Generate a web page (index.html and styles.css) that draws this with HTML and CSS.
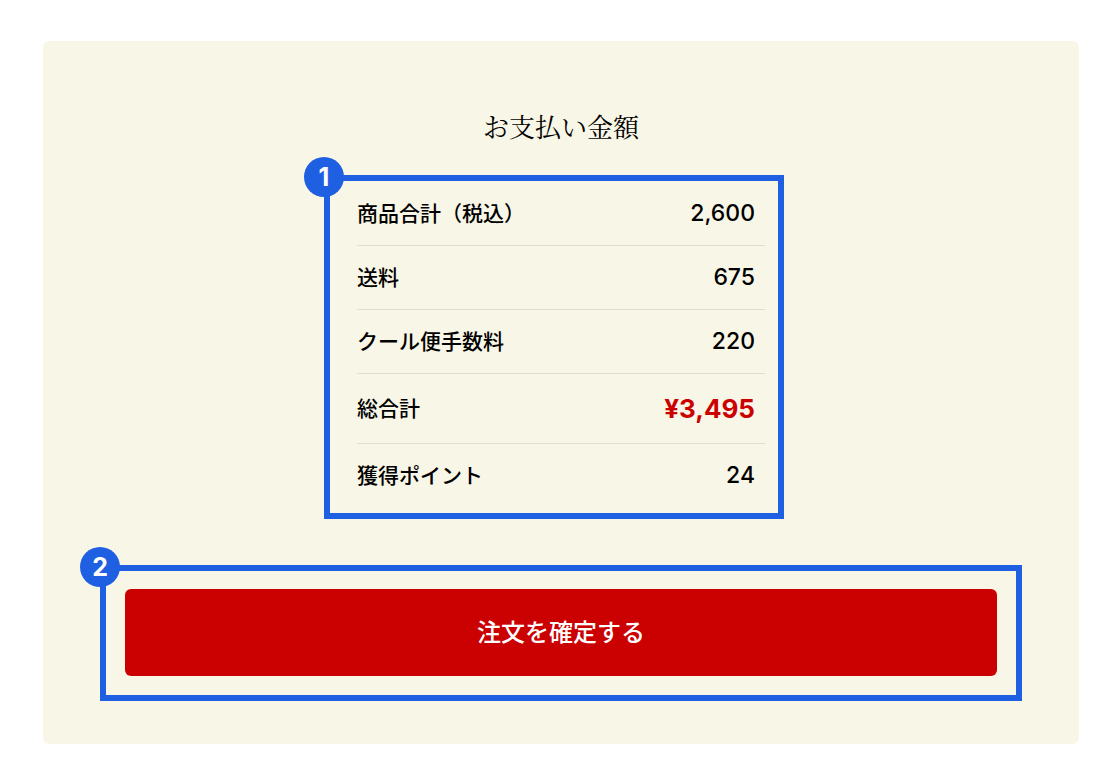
FILE: index.html
```
<!DOCTYPE html>
<html lang="ja">
<head>
<meta charset="utf-8">
<meta name="viewport" content="width=device-width, initial-scale=1">
<title>お支払い金額</title>
<link rel="stylesheet" href="styles.css">
</head>
<body>
<main class="payment">
  <h1 class="payment-title">お支払い金額</h1>
  <div class="summary">
    <dl class="summary-list">
      <div class="summary-row"><dt>商品合計（税込）</dt><dd>2,600</dd></div>
      <div class="summary-row"><dt>送料</dt><dd>675</dd></div>
      <div class="summary-row"><dt>クール便手数料</dt><dd>220</dd></div>
      <div class="summary-row summary-total"><dt>総合計</dt><dd>¥3,495</dd></div>
      <div class="summary-row"><dt>獲得ポイント</dt><dd>24</dd></div>
    </dl>
    <div class="callout callout-summary"><span class="callout-badge">1</span></div>
  </div>
  <div class="order">
    <button class="order-button" type="button">注文を確定する</button>
    <div class="callout callout-order"><span class="callout-badge">2</span></div>
  </div>
</main>
</body>
</html>
```
FILE: styles.css
```
* {
  box-sizing: border-box;
}

body {
  margin: 0;
  padding: 41px 41px 39px 43px;
  background: #fff;
  color: #000;
  font-family: Inter, "Noto Sans CJK JP", sans-serif;
}

.payment {
  display: flex;
  flex-direction: column;
  align-items: center;
  padding: 66px 82px 68px;
  border-radius: 6px;
  background: #f8f6e6;
}

.payment-title {
  margin: 0 0 38px;
  font-family: "Noto Serif CJK JP", "Noto Sans CJK JP", serif;
  font-size: 26px;
  font-weight: 400;
  line-height: 37px;
}

.summary {
  position: relative;
  width: 100%;
  max-width: 408px;
}

.summary-list {
  margin: 0;
}

.summary-row {
  display: flex;
  align-items: center;
  justify-content: space-between;
  padding: 16px 10px 16px 0;
  border-bottom: 1px solid #e0ded4;
  font-weight: 500;
  line-height: 31px;
}

.summary-row:last-child {
  border-bottom: 0;
}

.summary-row dt {
  padding-bottom: 2px;
  font-family: "Noto Sans CJK JP", sans-serif;
  font-size: 21px;
  line-height: 29px;
}

.summary-row dd {
  margin: 0;
  font-size: 23px;
}

.summary-total {
  line-height: 37px;
}

.summary-total dd {
  color: #cb0000;
  font-size: 26px;
  font-weight: 700;
}

.order {
  position: relative;
  width: 100%;
  margin-top: 82px;
}

.order-button {
  display: block;
  width: 100%;
  padding: 22px 24px 26px;
  border: 0;
  border-radius: 6px;
  background: #cb0000;
  color: #fff;
  font-family: "Noto Sans CJK JP", sans-serif;
  font-size: 24px;
  font-weight: 500;
  line-height: 39px;
  cursor: pointer;
}

/* Numbered frames laid over the areas they explain */
.callout {
  position: absolute;
  border: 6px solid #1f60e2;
  pointer-events: none;
}

.callout-summary {
  inset: -7px -19px -12px -33px;
}

.callout-order {
  inset: -24px -25px -25px;
}

.callout-badge {
  position: absolute;
  top: -24px;
  left: -26px;
  width: 40px;
  height: 40px;
  border-radius: 50%;
  background: #1f60e2;
  color: #fff;
  font-size: 25px;
  font-weight: 700;
  line-height: 40px;
  text-align: center;
}
```
